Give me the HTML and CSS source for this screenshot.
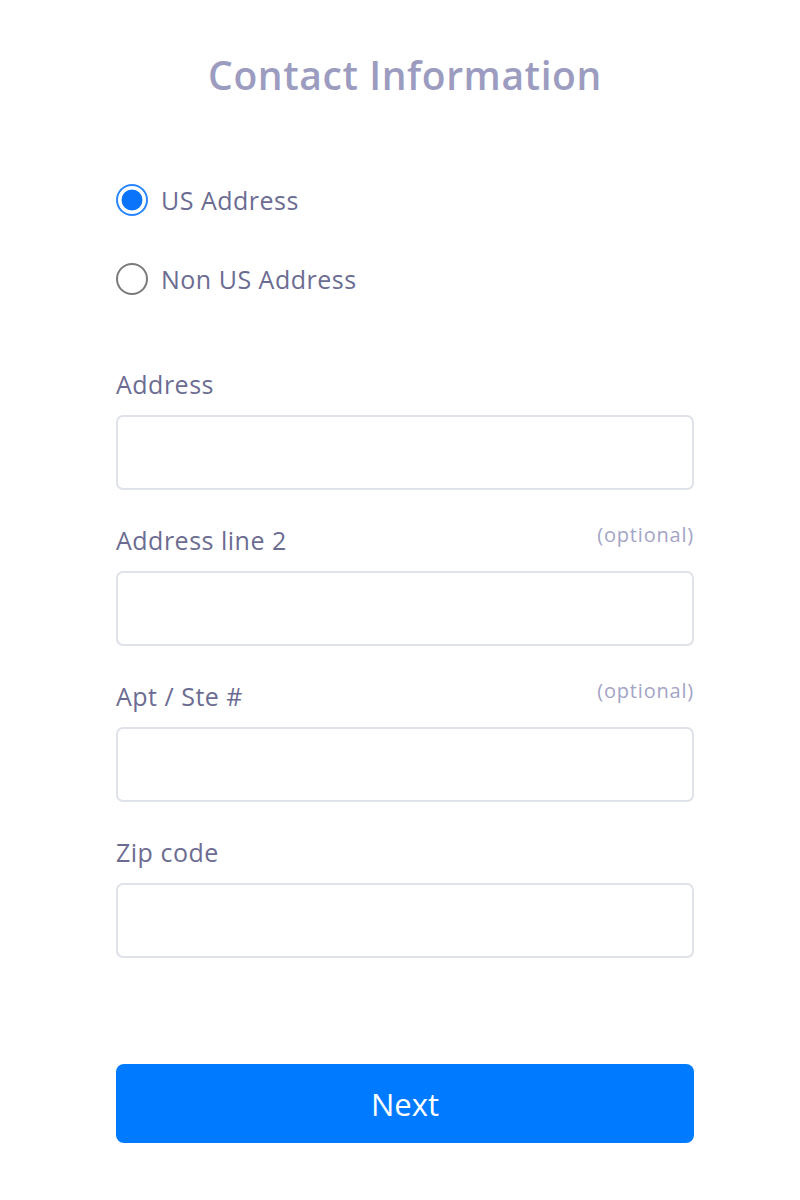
FILE: index.html
```html
<!DOCTYPE html>
<html lang="en">
<head>
<meta charset="utf-8">
<title>Contact Information</title>
<link rel="stylesheet" href="styles.css">
</head>
<body>
<main class="page">
  <h1 class="title">Contact Information</h1>
  <div class="radios">
    <label class="radio">
      <span class="radio-mark checked"></span>
      <span class="radio-text">US Address</span>
    </label>
    <label class="radio">
      <span class="radio-mark"></span>
      <span class="radio-text">Non US Address</span>
    </label>
  </div>
  <div class="fields">
    <div class="field">
      <div class="field-head"><span class="field-label">Address</span></div>
      <div class="input"></div>
    </div>
    <div class="field">
      <div class="field-head"><span class="field-label">Address line 2</span><span class="optional">(optional)</span></div>
      <div class="input"></div>
    </div>
    <div class="field">
      <div class="field-head"><span class="field-label">Apt / Ste #</span><span class="optional">(optional)</span></div>
      <div class="input"></div>
    </div>
    <div class="field">
      <div class="field-head"><span class="field-label">Zip code</span></div>
      <div class="input"></div>
    </div>
  </div>
  <button class="next" type="button">Next</button>
</main>
</body>
</html>
```
FILE: styles.css
```css
html, body {
  margin: 0;
  padding: 0;
  background: #ffffff;
}
body {
  font-family: "Open Sans", "Lato", sans-serif;
}
.page {
  width: 578px;
  margin: 0 0 0 116px;
  padding-top: 51px;
  display: flex;
  flex-direction: column;
}
.title {
  margin: 0;
  font-size: 39px;
  line-height: 48px;
  font-weight: 600;
  letter-spacing: 0.6px;
  color: #9c9cc0;
  text-align: center;
}
.radios {
  margin-top: 85px;
  display: flex;
  flex-direction: column;
  gap: 47px;
}
.radio {
  display: flex;
  align-items: center;
  height: 32px;
  gap: 13px;
}
.radio-mark {
  box-sizing: border-box;
  width: 32px;
  height: 32px;
  border-radius: 50%;
  border: 2px solid #7a7a7a;
  background: #fff;
  flex: none;
}
.radio-mark.checked {
  border: 2px solid #2a86ff;
  background: radial-gradient(circle, #0a74fb 0 10px, #ffffff 10.8px);
}
.radio-text {
  font-size: 25px;
  letter-spacing: 0.5px;
  color: #6c6c92;
  line-height: 30px;
}
.fields {
  margin-top: 74px;
  display: flex;
  flex-direction: column;
  gap: 35px;
}
.field-head {
  display: flex;
  justify-content: space-between;
  align-items: flex-start;
  height: 30px;
  margin-bottom: 16px;
}
.field-label {
  font-size: 25px;
  letter-spacing: 0.5px;
  line-height: 30px;
  color: #6c6c92;
}
.optional {
  font-size: 20px;
  letter-spacing: 0.8px;
  line-height: 20px;
  color: #a4a4c6;
}
.input {
  box-sizing: border-box;
  height: 75px;
  border: 2px solid #dfe2e8;
  border-radius: 7px;
  background: #fff;
}
.next {
  margin-top: 106px;
  height: 79px;
  border: none;
  border-radius: 8px;
  background: #007bff;
  color: #ffffff;
  font-family: "Open Sans", "Lato", sans-serif;
  font-size: 31px;
  padding: 0;
}
```
